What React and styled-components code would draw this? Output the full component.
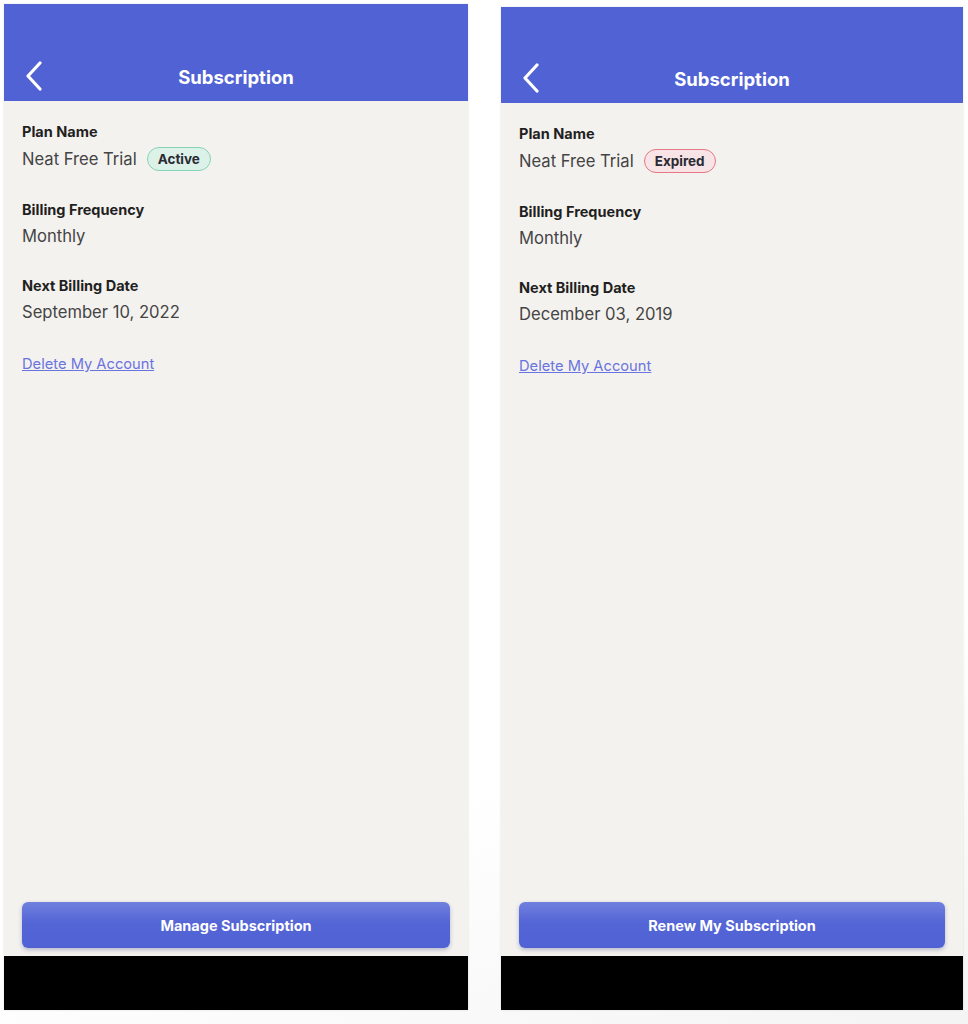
import styled, { createGlobalStyle } from 'styled-components';

const GlobalStyle = createGlobalStyle`
  html, body {
    margin: 0;
    padding: 0;
    background: #ffffff;
    font-family: Inter, Roboto, "Liberation Sans", Arial, sans-serif;
  }
`;

const Page = styled.div`
  display: flex;
  align-items: flex-start;
  gap: 33px;
  padding: 4px 0 0 4px;
  width: 968px;
  height: 1024px;
  box-sizing: border-box;
  background: linear-gradient(160deg, #ffffff 70%, #f4f4f4 100%);
`;

const Phone = styled.div`
  display: flex;
  flex-direction: column;
  width: ${p => p.$width}px;
  margin-top: ${p => p.$offset || 0}px;
  height: ${p => 1006 - (p.$offset || 0)}px;
  background: #f4f2ef;
  box-shadow: 0 0 2px rgba(0, 0, 0, 0.12);
`;

const Header = styled.div`
  position: relative;
  display: flex;
  align-items: flex-end;
  justify-content: center;
  height: ${p => p.$height}px;
  padding-bottom: 13px;
  box-sizing: border-box;
  background: #5062d4;
  flex-shrink: 0;
`;

const BackButton = styled.button`
  position: absolute;
  left: 16px;
  bottom: 10px;
  display: flex;
  align-items: center;
  justify-content: center;
  width: 28px;
  height: 30px;
  padding: 0;
  border: none;
  background: none;
  cursor: pointer;
`;

const Title = styled.h1`
  margin: 0;
  color: #ffffff;
  font-size: 18.5px;
  font-weight: 700;
`;

const Content = styled.div`
  flex: 1;
  display: flex;
  flex-direction: column;
  padding: 22px 18px 8px 18px;
`;

const Field = styled.div`
  display: flex;
  flex-direction: column;
  gap: 7px;
  margin-bottom: 30px;
`;

const Label = styled.div`
  font-size: 14.5px;
  font-weight: 700;
  color: #1f1f22;
  line-height: 17px;
`;

const ValueRow = styled.div`
  display: flex;
  align-items: center;
  gap: 10px;
  font-size: 16.6px;
  color: #444;
  line-height: 22px;
`;

const Badge = styled.span`
  display: inline-flex;
  align-items: center;
  height: 24px;
  padding: 0 10px;
  border-radius: 12px;
  box-sizing: border-box;
  font-size: 13.5px;
  font-weight: 700;
  color: #2a2a33;
  background: ${p => (p.$tone === 'red' ? '#f8e4e6' : '#dcf2e9')};
  border: 1.5px solid ${p => (p.$tone === 'red' ? '#e47884' : '#86d3b5')};
`;

const DeleteLink = styled.a`
  margin-top: 2px;
  font-size: 14.7px;
  color: #6a74df;
  text-decoration: underline;
  cursor: pointer;
`;

const Spacer = styled.div`
  flex: 1;
`;

const ActionButton = styled.button`
  height: 46px;
  width: 100%;
  border: none;
  border-radius: 6px;
  background: linear-gradient(180deg, #7080de 0%, #5465d6 45%, #5062d4 100%);
  box-shadow: 0 2px 4px rgba(40, 50, 120, 0.3);
  color: #fff;
  font-family: inherit;
  font-size: 14.5px;
  font-weight: 700;
  cursor: pointer;
`;

const NavBar = styled.div`
  height: 54px;
  background: #000;
  flex-shrink: 0;
`;

function Chevron() {
  return (
    <svg width="20" height="30" viewBox="0 0 20 30" fill="none">
      <path d="M16 2 L4 15 L16 28" stroke="#fff" strokeWidth="3.2" strokeLinecap="round" strokeLinejoin="round" />
    </svg>
  );
}

function SubscriptionScreen({ width, offset, headerHeight, status, tone, date, action }) {
  return (
    <Phone $width={width} $offset={offset}>
      <Header $height={headerHeight}>
        <BackButton aria-label="Back">
          <Chevron />
        </BackButton>
        <Title>Subscription</Title>
      </Header>
      <Content>
        <Field>
          <Label>Plan Name</Label>
          <ValueRow>
            Neat Free Trial
            <Badge $tone={tone}>{status}</Badge>
          </ValueRow>
        </Field>
        <Field>
          <Label>Billing Frequency</Label>
          <ValueRow>Monthly</ValueRow>
        </Field>
        <Field>
          <Label>Next Billing Date</Label>
          <ValueRow>{date}</ValueRow>
        </Field>
        <DeleteLink>Delete My Account</DeleteLink>
        <Spacer />
        <ActionButton>{action}</ActionButton>
      </Content>
      <NavBar />
    </Phone>
  );
}

export default function App() {
  return (
    <>
      <GlobalStyle />
      <Page>
        <SubscriptionScreen
          width={464}
          offset={0}
          headerHeight={97}
          status="Active"
          tone="green"
          date="September 10, 2022"
          action="Manage Subscription"
        />
        <SubscriptionScreen
          width={462}
          offset={3}
          headerHeight={96}
          status="Expired"
          tone="red"
          date="December 03, 2019"
          action="Renew My Subscription"
        />
      </Page>
    </>
  );
}
